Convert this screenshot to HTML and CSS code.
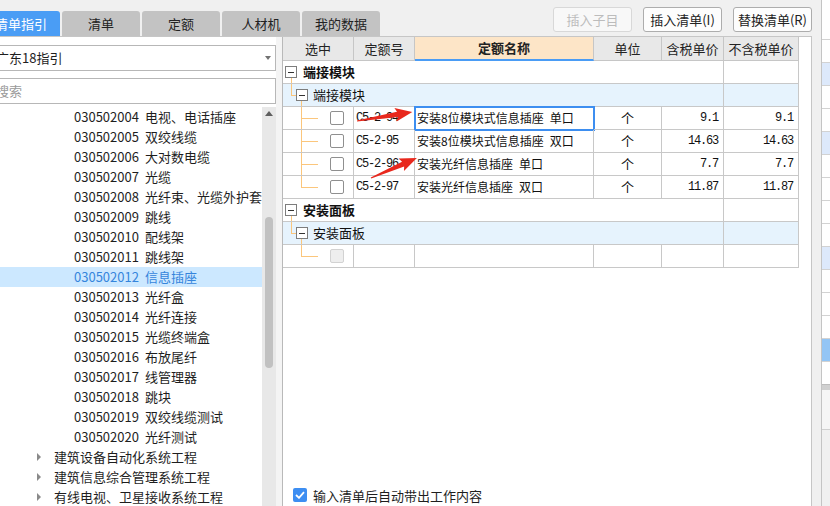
FILE: index.html
```html
<!DOCTYPE html>
<html lang="zh-CN">
<head>
<meta charset="utf-8">
<title>清单指引</title>
<link rel="stylesheet" href="styles.css">
</head>
<body>
<div class="app">
  <div class="main">
    <div class="topbar">
      <div class="tabs">
        <div class="tab active">清单指引</div>
        <div class="tab">清单</div>
        <div class="tab">定额</div>
        <div class="tab">人材机</div>
        <div class="tab">我的数据</div>
      </div>
      <div class="actions">
        <button class="btn" disabled>插入子目</button>
        <button class="btn">插入清单(I)</button>
        <button class="btn">替换清单(R)</button>
      </div>
    </div>
    <div class="content">
      <div class="left">
        <div class="combo"><span>广东18指引</span><span class="caret"></span></div>
        <div class="search">搜索</div>
        <div class="listwrap">
          <ul class="list">
            <li><span class="code">030502004</span>电视、电话插座</li>
            <li><span class="code">030502005</span>双绞线缆</li>
            <li><span class="code">030502006</span>大对数电缆</li>
            <li><span class="code">030502007</span>光缆</li>
            <li><span class="code">030502008</span>光纤束、光缆外护套</li>
            <li><span class="code">030502009</span>跳线</li>
            <li><span class="code">030502010</span>配线架</li>
            <li><span class="code">030502011</span>跳线架</li>
            <li class="sel"><span class="code">030502012</span>信息插座</li>
            <li><span class="code">030502013</span>光纤盒</li>
            <li><span class="code">030502014</span>光纤连接</li>
            <li><span class="code">030502015</span>光缆终端盒</li>
            <li><span class="code">030502016</span>布放尾纤</li>
            <li><span class="code">030502017</span>线管理器</li>
            <li><span class="code">030502018</span>跳块</li>
            <li><span class="code">030502019</span>双绞线缆测试</li>
            <li><span class="code">030502020</span>光纤测试</li>
            <li class="node"><span class="tri"></span>建筑设备自动化系统工程</li>
            <li class="node"><span class="tri"></span>建筑信息综合管理系统工程</li>
            <li class="node"><span class="tri"></span>有线电视、卫星接收系统工程</li>
          </ul>
          <div class="scrollbar"><div class="sb-up"><span></span></div><div class="sb-thumb"></div></div>
        </div>
      </div>
      <div class="splitter"></div>
      <div class="right">
        <div class="grid">
          <div class="hd">选中</div>
          <div class="hd">定额号</div>
          <div class="hd sort">定额名称</div>
          <div class="hd">单位</div>
          <div class="hd">含税单价</div>
          <div class="hd">不含税单价</div>

          <div class="c grp lv1"><span class="tog"></span><b>端接模块</b></div>
          <div class="c"></div>

          <div class="c grp lv2 sub"><span class="tog"></span>端接模块</div>
          <div class="c sub"></div>

          <div class="c leaf"><span class="chk"></span></div>
          <div class="c mono">C5-2-94</div>
          <div class="c name sel">安装8位模块式信息插座&ensp;单口</div>
          <div class="c unit">个</div>
          <div class="c mono num">9.1</div>
          <div class="c mono num">9.1</div>

          <div class="c leaf"><span class="chk"></span></div>
          <div class="c mono">C5-2-95</div>
          <div class="c name">安装8位模块式信息插座&ensp;双口</div>
          <div class="c unit">个</div>
          <div class="c mono num">14.63</div>
          <div class="c mono num">14.63</div>

          <div class="c leaf"><span class="chk"></span></div>
          <div class="c mono">C5-2-96</div>
          <div class="c name">安装光纤信息插座&ensp;单口</div>
          <div class="c unit">个</div>
          <div class="c mono num">7.7</div>
          <div class="c mono num">7.7</div>

          <div class="c leaf last"><span class="chk"></span></div>
          <div class="c mono">C5-2-97</div>
          <div class="c name">安装光纤信息插座&ensp;双口</div>
          <div class="c unit">个</div>
          <div class="c mono num">11.87</div>
          <div class="c mono num">11.87</div>

          <div class="c grp lv1"><span class="tog"></span><b>安装面板</b></div>
          <div class="c"></div>

          <div class="c grp lv2 sub"><span class="tog"></span>安装面板</div>
          <div class="c sub"></div>

          <div class="c leaf last"><span class="chk dis"></span></div>
          <div class="c"></div>
          <div class="c"></div>
          <div class="c"></div>
          <div class="c"></div>
          <div class="c"></div>
        </div>
        <div class="footer">
          <span class="cbx"><svg width="10" height="8" viewBox="0 0 10 8"><path d="M1 4 L4 6.8 L9 1.2" fill="none" stroke="#fff" stroke-width="1.8"/></svg></span>
          输入清单后自动带出工作内容
        </div>
      </div>
    </div>
  </div>
  <div class="gap"></div>
  <div class="side">
    <div class="side-top"></div>
    <div class="side-row"></div>
    <div class="side-row b"></div>
    <div class="side-row"></div>
    <div class="side-row"></div>
    <div class="side-row b"></div>
    <div class="side-row"></div>
    <div class="side-row"></div>
    <div class="side-row"></div>
    <div class="side-row"></div>
    <div class="side-row b"></div>
    <div class="side-row"></div>
    <div class="side-row"></div>
    <div class="side-row"></div>
    <div class="side-row s"></div>
    <div class="side-row"></div>
    <div class="side-band"></div>
    <div class="side-light"></div>
  </div>
</div>
<svg class="arrows" width="830" height="506" viewBox="0 0 830 506">
  <polygon points="0,-0.6 41,-2.6 39,-6.8 56,0 39,6.8 41,2.6 0,0.6" fill="#e8281d" transform="translate(357 121) rotate(-9.3)"/>
  <polygon points="0,-0.6 35,-2.6 33,-6.8 50,0 33,6.8 35,2.6 0,0.6" fill="#e8281d" transform="translate(371 178) rotate(-23.5)"/>
</svg>
</body>
</html>
```
FILE: styles.css
```css
* { box-sizing: border-box; }
html, body { margin: 0; padding: 0; }
body {
  width: 830px;
  height: 506px;
  overflow: hidden;
  background: #f0f0f0;
  font-family: "Noto Sans CJK SC", "Noto Sans", sans-serif;
  font-size: 13px;
  color: #1e1e1e;
}
.app { display: flex; height: 506px; }
.main { width: 812px; display: flex; flex-direction: column; }

/* top bar */
.topbar { height: 36px; display: flex; flex: none; }
.tabs { display: flex; gap: 2px; margin-left: -18px; align-self: flex-end; }
.tab {
  width: 78px; height: 25px; line-height: 25px; text-align: center;
  background: #c3c3c3; border-radius: 3px 3px 0 0; color: #222; font-size: 13px;
}
.tab.active { background: #4a9df5; color: #fff; }
.actions { margin-left: auto; display: flex; gap: 11px; padding-top: 7px; }
.btn {
  width: 79px; height: 25px; padding: 0; border: 1px solid #adadad; border-radius: 3px;
  background: #fdfdfd; font-family: inherit; font-size: 13px; color: #222; line-height: 23px;
}
.btn:disabled { border-color: #d8d8d8; color: #bcbcbc; background: #f8f8f8; }

/* content */
.content {
  flex: 1; display: flex; min-height: 0;
  border-top: 1px solid #c6c6c6; border-right: 1px solid #c6c6c6;
}
.left { width: 276px; flex: none; background: #fff; display: flex; flex-direction: column; overflow: hidden; }
.combo {
  margin: 8px 0 0 -10px; height: 26px; border: 1px solid #b7b7b7;
  display: flex; align-items: center; padding: 0 4px 0 5px; line-height: 24px; color: #1e1e1e;
}
.caret {
  margin-left: auto; width: 0; height: 0;
  border-top: 4px solid #727272; border-left: 3.5px solid transparent; border-right: 3.5px solid transparent;
}
.search {
  margin: 7px 0 0 -10px; height: 26px; border: 1px solid #b7b7b7;
  color: #9a9a9a; padding-left: 5px; line-height: 24px;
}
.listwrap { flex: 1; display: flex; min-height: 0; margin-top: 3px; }
.list { flex: 1; margin: 0; padding: 0; list-style: none; overflow: hidden; }
.list li { height: 20px; line-height: 20px; padding-left: 74px; white-space: nowrap; display: flex; }
.list .code { width: 71px; flex: none; }
.list li.sel { background: #cce8ff; color: #3585dc; }
.list li.node { padding-left: 37px; align-items: center; }
.tri {
  width: 0; height: 0; margin-right: 13px;
  border-left: 4px solid #8a8a8a; border-top: 4px solid transparent; border-bottom: 4px solid transparent;
}
.scrollbar { width: 14px; flex: none; background: #e8e8e8; display: flex; flex-direction: column; align-items: center; }
.sb-up { width: 14px; height: 12px; display: flex; align-items: center; justify-content: center; }
.sb-up span {
  width: 0; height: 0;
  border-bottom: 5px solid #5f5f5f; border-left: 4.5px solid transparent; border-right: 4.5px solid transparent;
}
.sb-thumb { width: 8px; height: 151px; margin-top: 98px; border-radius: 4px; background: #c1c1c1; }
.splitter { width: 6px; flex: none; background: #f4f4f4; }
.right { flex: 1; background: #fff; border-left: 1px solid #b9b9b9; display: flex; flex-direction: column; min-width: 0; }

/* grid */
.grid {
  display: grid; width: 516px;
  grid-template-columns: 71px 61px 179px 68px 62px 75px;
  grid-template-rows: 24px; grid-auto-rows: 23px;
}
.hd {
  background: #e8e8e8; border-right: 1px solid #c6c6c6; border-bottom: 1px solid #c6c6c6;
  text-align: center; line-height: 23px; font-size: 13px; color: #222;
}
.hd.sort { background: #fde5c7; font-weight: bold; border-bottom: 2px solid #4a9cf5; line-height: 22px; }
.c {
  border-right: 1px solid #c8c8c8; border-bottom: 1px solid #c8c8c8;
  font-size: 12px; line-height: 22px; white-space: nowrap; color: #111;
}
.grp { grid-column: span 5; display: flex; align-items: center; }
.grp b { font-size: 13px; }
.sub { background: #e6f3fd; }
.lv1 {
  padding-left: 2px; gap: 6px;
  background: linear-gradient(#fbc67c, #fbc67c) 8px 17px / 1px 6px no-repeat;
}
.lv2 {
  padding-left: 13px; gap: 5px; font-size: 13px;
  background:
    linear-gradient(#fbc67c, #fbc67c) 8px 0 / 1px 12px no-repeat,
    linear-gradient(#fbc67c, #fbc67c) 8px 11px / 5px 1px no-repeat,
    linear-gradient(#fbc67c, #fbc67c) 18px 17px / 1px 6px no-repeat,
    #e6f3fd;
}
.tog {
  width: 12px; height: 12px; flex: none; border: 1px solid #7d7d7d; background: #fff;
  display: flex; align-items: center; justify-content: center;
}
.tog::before { content: ""; width: 6px; height: 1px; background: #333; }
.leaf {
  padding-left: 47px; display: flex; align-items: center;
  background:
    linear-gradient(#fbc67c, #fbc67c) 18px 0 / 1px 100% no-repeat,
    linear-gradient(#fbc67c, #fbc67c) 18px 11px / 17px 1px no-repeat;
}
.leaf.last {
  background:
    linear-gradient(#fbc67c, #fbc67c) 18px 0 / 1px 12px no-repeat,
    linear-gradient(#fbc67c, #fbc67c) 18px 11px / 17px 1px no-repeat;
}
.chk { width: 14px; height: 14px; border: 1px solid #8f8f8f; border-radius: 2px; background: #fff; }
.chk.dis { background: #eeeeee; border-color: #d2d2d2; }
.mono { font-family: "Liberation Mono", "DejaVu Sans Mono", monospace; letter-spacing: -1.2px; padding-left: 2px; }
.name { padding-left: 2px; }
.name.sel { outline: 2px solid #3d8ef0; outline-offset: -1px; }
.unit { text-align: center; font-size: 13px; }
.num { text-align: right; padding-right: 5px; }

.footer { margin-top: auto; height: 22px; display: flex; align-items: center; padding-left: 10px; font-size: 13px; color: #1e1e1e; }
.cbx {
  width: 14px; height: 14px; border-radius: 2px; background: #3d8ef2; margin-right: 6px;
  display: flex; align-items: center; justify-content: center;
}

/* right strip */
.gap { width: 9px; flex: none; background: #f0f0f0; }
.side { width: 9px; flex: none; border-left: 1px solid #c4c4c4; background: #f0f0f0; display: flex; flex-direction: column; }
.side-top { height: 39px; background: #fff; }
.side-row { height: 23px; border-top: 1px solid #d2d2d2; background: #fff; }
.side-row.b { background: #dde9fb; }
.side-row.s { background: #93c5f5; }
.side-band { height: 6px; background: #d0d0d0; border-top: 1px solid #bdbdbd; }
.side-light { height: 40px; background: #f6f6f6; border-bottom: 1px solid #d0d0d0; }

.arrows { position: absolute; left: 0; top: 0; pointer-events: none; }
```
